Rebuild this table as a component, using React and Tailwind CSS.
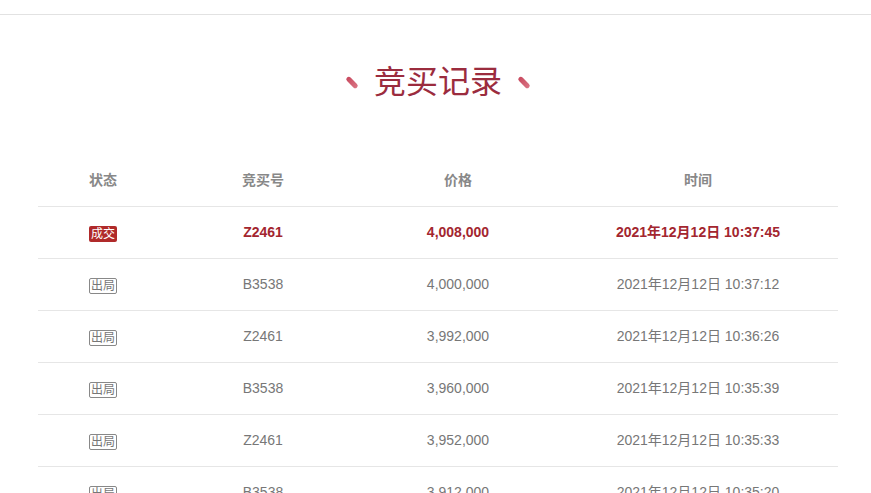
import React from "react";

const rows = [
  { win: true, no: "Z2461", price: "4,008,000", time: "2021年12月12日 10:37:45" },
  { no: "B3538", price: "4,000,000", time: "2021年12月12日 10:37:12" },
  { no: "Z2461", price: "3,992,000", time: "2021年12月12日 10:36:26" },
  { no: "B3538", price: "3,960,000", time: "2021年12月12日 10:35:39" },
  { no: "Z2461", price: "3,952,000", time: "2021年12月12日 10:35:33" },
  { no: "B3538", price: "3,912,000", time: "2021年12月12日 10:35:20" },
];

const font = { fontFamily: '"Liberation Sans", "Noto Sans CJK SC", sans-serif' };

function Pill() {
  return (
    <span className="inline-block w-[14px] h-[5px] rounded-full rotate-45 bg-gradient-to-r from-[#c8485e] to-[#d97585]" />
  );
}

export default function App() {
  return (
    <div className="w-[871px] h-[493px] overflow-hidden bg-white" style={font}>
      <div className="h-[15px] border-b border-[#e2e2e2]" />
      <div className="pt-[47px] pl-[5px] flex items-center justify-center gap-[15px]">
        <Pill />
        <div className="text-[32px] leading-[40px] text-[#9b2c3e]">竞买记录</div>
        <Pill />
      </div>
      <div className="ml-[38px] w-[800px] mt-[53px] text-[14px]">
        <div className="grid grid-cols-[130px_190px_200px_280px] h-[52px] items-center border-b border-[#e6e6e6] text-[#888] font-bold">
          <div className="text-center">状态</div>
          <div className="text-center">竞买号</div>
          <div className="text-center">价格</div>
          <div className="text-center">时间</div>
        </div>
        {rows.map((r, i) => (
          <div
            key={i}
            className={
              "grid grid-cols-[130px_190px_200px_280px] h-[52px] items-center border-b border-[#e6e6e6] " +
              (r.win ? "text-[#a3262f] font-bold" : "text-[#777]")
            }
          >
            <div className="flex justify-center pt-[3px]">
              {r.win ? (
                <span className="inline-flex items-center justify-center w-[28px] h-[16px] rounded-[2px] bg-[#b02a2a] text-white text-[12px] leading-none font-normal">
                  成交
                </span>
              ) : (
                <span className="inline-flex items-center justify-center w-[28px] h-[16px] rounded-[2px] border border-[#888] text-[#777] text-[12px] leading-none">
                  出局
                </span>
              )}
            </div>
            <div className="text-center">{r.no}</div>
            <div className="text-center">{r.price}</div>
            <div className="text-center">{r.time}</div>
          </div>
        ))}
      </div>
    </div>
  );
}
